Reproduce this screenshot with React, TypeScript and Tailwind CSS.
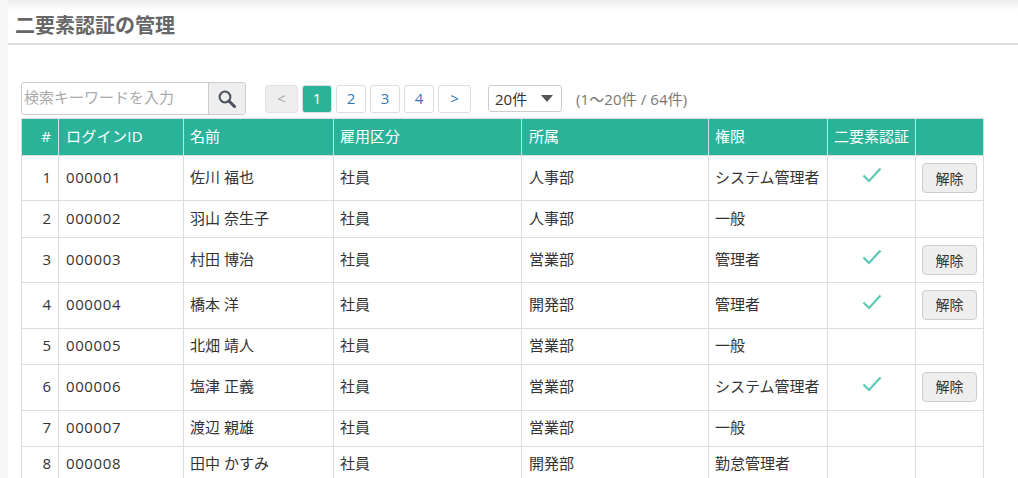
import React from 'react'

const rows = [
  { no: 1, id: '000001', name: '佐川 福也', type: '社員', dept: '人事部', role: 'システム管理者', tfa: true, h: 'h-[45px]' },
  { no: 2, id: '000002', name: '羽山 奈生子', type: '社員', dept: '人事部', role: '一般', tfa: false, h: 'h-[37px]' },
  { no: 3, id: '000003', name: '村田 博治', type: '社員', dept: '営業部', role: '管理者', tfa: true, h: 'h-[45px]' },
  { no: 4, id: '000004', name: '橋本 洋', type: '社員', dept: '開発部', role: '管理者', tfa: true, h: 'h-[46px]' },
  { no: 5, id: '000005', name: '北畑 靖人', type: '社員', dept: '営業部', role: '一般', tfa: false, h: 'h-[36px]' },
  { no: 6, id: '000006', name: '塩津 正義', type: '社員', dept: '営業部', role: 'システム管理者', tfa: true, h: 'h-[46px]' },
  { no: 7, id: '000007', name: '渡辺 親雄', type: '社員', dept: '営業部', role: '一般', tfa: false, h: 'h-[36px]' },
  { no: 8, id: '000008', name: '田中 かすみ', type: '社員', dept: '開発部', role: '勤怠管理者', tfa: false, h: 'h-[36px]' },
]

const headers = ['#', 'ログインID', '名前', '雇用区分', '所属', '権限', '二要素認証', '']
const widths = ['w-[37px]', 'w-[125px]', 'w-[150px]', 'w-[188px]', 'w-[187px]', 'w-[119px]', 'w-[88px]', 'w-[68px]']
const headerAligns = [
  'px-[7px] text-right',
  'px-[7px] text-left',
  'px-[6px] text-left',
  'px-[6px] text-left',
  'px-[7px] text-left',
  'px-[6px] text-left',
  'pl-[6px] text-left',
  'px-[6px]',
]

const PageButton = ({ label, active, disabled }: { label: string; active?: boolean; disabled?: boolean }) => {
  let color = 'border-[#ddd] bg-white text-[#337ab7]'
  if (active) color = 'border-[#ddd] bg-[#2bb39a] text-white'
  if (disabled) color = 'border-[#e2e2e2] bg-[#eee] text-[#aaa]'
  return (
    <div className={`flex h-[28px] items-center justify-center rounded-[3px] border pb-[1px] text-[15px] ${label === '<' || label === '>' ? 'w-[33px]' : 'w-[30px]'} ${color}`}>
      {label}
    </div>
  )
}

export default function App() {
  return (
    <div className="h-[478px] w-[1018px] overflow-hidden bg-[#f7f7f7] pl-[8px] font-['Open_Sans','Noto_Sans_CJK_JP',sans-serif] text-[15px] text-[#333]">
      <div className="h-full bg-white">
        <div className="h-[10px] bg-gradient-to-b from-[#ececec] to-white" />
        <h1 className="flex h-[33px] items-center pb-[2px] pl-[7px] text-[20px] font-bold text-[#666]">二要素認証の管理</h1>
        <div className="h-[2px] bg-[#ddd]" />

        <div className="pl-[13px]">
          {/* search + pager */}
          <div className="mt-[37px] flex h-[33px] items-center">
            <div className="flex h-[33px] w-[225px] rounded-[3px] border border-[#ccc]">
              <div className="flex flex-1 items-center pb-[2px] pl-[2px] text-[15px] text-[#aaa]">検索キーワードを入力</div>
              <div className="flex w-[37px] items-center justify-center rounded-r-[3px] border-l border-[#ccc] bg-[#eee]">
                <svg width="18" height="18" viewBox="0 0 18 18" fill="none">
                  <circle cx="7" cy="7" r="5.4" stroke="#4a4f5c" strokeWidth="2" />
                  <path d="M11 11l5.5 5.5" stroke="#4a4f5c" strokeWidth="3" strokeLinecap="round" />
                </svg>
              </div>
            </div>
            <div className="ml-[19px] flex gap-[4px] pt-[1px]">
              <PageButton label="<" disabled />
              <PageButton label="1" active />
              <PageButton label="2" />
              <PageButton label="3" />
              <PageButton label="4" />
              <PageButton label=">" />
            </div>
            <div className="ml-[17px] flex h-[27px] w-[74px] items-center justify-between rounded-[3px] border border-[#ccc] pl-[6px] pr-[8px] text-[15px]">
              <span className="pt-[1px]">20件</span>
              <span className="h-0 w-0 border-x-[6px] border-t-[7px] border-x-transparent border-t-[#555]" />
            </div>
            <div className="ml-[14px] pt-[1px] text-[15px] tracking-[0.1px] text-[#777]">(1～20件 / 64件)</div>
          </div>

          <table className="mt-[3px] w-[963px] table-fixed border-collapse">
            <thead>
              <tr className="h-[37px] bg-[#2bb39a] text-white">
                {headers.map((h, i) => (
                  <th
                    key={i}
                    className={`border border-[#ddd] pb-[2px] text-[15px] font-normal whitespace-nowrap ${widths[i]} ${headerAligns[i]} ${i === 1 ? 'tracking-[0.3px]' : ''}`}
                  >
                    {h}
                  </th>
                ))}
              </tr>
            </thead>
            <tbody>
              {rows.map((r) => (
                <tr key={r.no} className={r.h}>
                  <td className="border border-[#ddd] px-[7px] pb-[2px] text-right">{r.no}</td>
                  <td className="border border-[#ddd] px-[7px] pb-[2px] tracking-[0.6px]">{r.id}</td>
                  <td className="border border-[#ddd] px-[6px] pb-[2px]">{r.name}</td>
                  <td className="border border-[#ddd] px-[6px] pb-[2px]">{r.type}</td>
                  <td className="border border-[#ddd] px-[7px] pb-[2px]">{r.dept}</td>
                  <td className="border border-[#ddd] px-[6px] pb-[2px] whitespace-nowrap">{r.role}</td>
                  <td className="border border-[#ddd] px-[7px]">
                    {r.tfa && (
                      <svg width="20" height="16" viewBox="0 0 20 16" fill="none" className="mx-auto -mt-[7px]">
                        <path d="M1.5 8.5l5.5 5.5L18.5 1.5" stroke="#5cc9b4" strokeWidth="2.2" />
                      </svg>
                    )}
                  </td>
                  <td className={`border border-[#ddd] px-[6px] ${r.h === 'h-[46px]' ? 'pb-[2px]' : ''}`}>
                    {r.tfa && (
                      <div className="flex h-[30px] w-[55px] items-center justify-center rounded-[4px] border border-[#ccc] bg-[#eee] text-[14px]">解除</div>
                    )}
                  </td>
                </tr>
              ))}
            </tbody>
          </table>
        </div>
      </div>
    </div>
  )
}
